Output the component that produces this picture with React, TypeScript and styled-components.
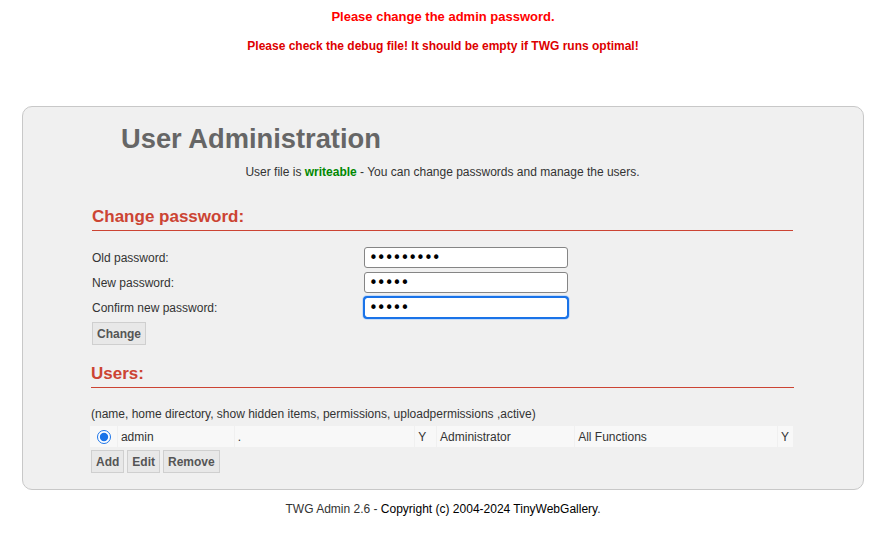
import styled, { createGlobalStyle } from 'styled-components';

const GlobalStyle = createGlobalStyle`
  body {
    margin: 0;
    background: #ffffff;
    font-family: 'Liberation Sans', Arial, sans-serif;
    font-size: 12px;
    color: #333333;
  }
`;

const users = [
  { name: 'admin', home: '.', hidden: 'Y', role: 'Administrator', perms: 'All Functions', active: 'Y' },
];

export default function App() {
  return (
    <Page>
      <GlobalStyle />
      <Warning>Please change the admin password.</Warning>
      <DebugNote>Please check the debug file! It should be empty if TWG runs optimal!</DebugNote>

      <Panel>
        <Title>User Administration</Title>
        <Status>
          User file is <Writeable>writeable</Writeable> - You can change passwords and manage the users.
        </Status>

        <Section>
          <SectionTitle>Change password:</SectionTitle>
          <PasswordForm>
            <FieldLabel>Old password:</FieldLabel>
            <Input type="password" defaultValue="123456789" />
            <FieldLabel>New password:</FieldLabel>
            <Input type="password" defaultValue="12345" />
            <FieldLabel>Confirm new password:</FieldLabel>
            <Input type="password" defaultValue="12345" $focused />
          </PasswordForm>
          <Button>Change</Button>
        </Section>

        <Section $users>
          <SectionTitle $users>Users:</SectionTitle>
          <Columns>(name, home directory, show hidden items, permissions, uploadpermissions ,active)</Columns>
          <UserTable>
            <tbody>
              {users.map((u) => (
                <tr key={u.name}>
                  <Cell $w={27} $center>
                    <Radio defaultChecked />
                  </Cell>
                  <Cell $w={117}>{u.name}</Cell>
                  <Cell $w={182}>{u.home}</Cell>
                  <Cell $w={21}>{u.hidden}</Cell>
                  <Cell $w={138}>{u.role}</Cell>
                  <Cell $w={204}>{u.perms}</Cell>
                  <Cell $w={15}>{u.active}</Cell>
                </tr>
              ))}
            </tbody>
          </UserTable>
          <ButtonRow>
            <Button>Add</Button>
            <Button>Edit</Button>
            <Button>Remove</Button>
          </ButtonRow>
        </Section>
      </Panel>

      <Footer>
        TWG Admin 2.6 - <FooterLink>Copyright (c) 2004-2024 TinyWebGallery</FooterLink>.
      </Footer>
    </Page>
  );
}

const Page = styled.div`
  padding: 9px 28px 0 22px;
`;

const Warning = styled.div`
  text-align: center;
  font-size: 13px;
  font-weight: bold;
  line-height: 16px;
  color: #ff0000;
`;

const DebugNote = styled.div`
  margin-top: 13px;
  text-align: center;
  font-size: 12px;
  font-weight: bold;
  line-height: 16px;
  color: #dd0000;
`;

const Panel = styled.div`
  margin-top: 52px;
  box-sizing: border-box;
  height: 384px;
  padding: 14px 69px 0 68px;
  background: #f0f0f0;
  border: 1px solid #c8c8c8;
  border-radius: 10px;
`;

const Title = styled.h1`
  margin: 0 0 0 30px;
  font-size: 27.3px;
  line-height: 36px;
  font-weight: bold;
  color: #666666;
`;

const Status = styled.div`
  margin-top: 8px;
  text-align: center;
  line-height: 14px;
  color: #333333;
`;

const Writeable = styled.b`
  color: #008800;
`;

const Section = styled.div<{ $users?: boolean }>`
  margin-top: ${(p) => (p.$users ? '19px' : '28px')};
  margin-left: ${(p) => (p.$users ? '0' : '1px')};
`;

const SectionTitle = styled.h2<{ $users?: boolean }>`
  margin: 0;
  padding-bottom: 3px;
  font-size: 17px;
  line-height: 20px;
  font-weight: bold;
  color: #cc4433;
  border-bottom: 1px solid #cc4433;
  width: ${(p) => (p.$users ? '703px' : '701px')};
`;

const PasswordForm = styled.div`
  display: grid;
  grid-template-columns: 272px 204px;
  row-gap: 4px;
  align-items: center;
  margin-top: 16px;
`;

const FieldLabel = styled.label`
  font-size: 12px;
  color: #333333;
`;

const Input = styled.input<{ $focused?: boolean }>`
  box-sizing: border-box;
  width: 204px;
  height: 21px;
  margin: 0;
  padding: 0 4px;
  font-family: 'DejaVu Sans', sans-serif;
  font-size: 15px;
  letter-spacing: -1px;
  background: #ffffff;
  border: 1px solid ${(p) => (p.$focused ? '#1a73e8' : '#858585')};
  border-radius: 3px;
  outline: ${(p) => (p.$focused ? '2px solid #1a73e8' : 'none')};
  outline-offset: -1px;
  box-shadow: ${(p) => (p.$focused ? '0 0 0 2px #c7dcf7' : 'none')};
`;

const Button = styled.button`
  box-sizing: border-box;
  height: 23px;
  margin: 4px 0 0;
  padding: 0 4px;
  font-family: 'Liberation Sans', Arial, sans-serif;
  font-size: 12px;
  font-weight: bold;
  color: #555555;
  background: #e8e8e8;
  border: 1px solid #cfcfcf;
  border-radius: 0;
`;

const Columns = styled.div`
  margin-top: 19px;
  line-height: 14px;
  color: #333333;
`;

const UserTable = styled.table`
  margin: 4px 0 0 -2px;
  border-spacing: 1px;
  table-layout: fixed;
`;

const Cell = styled.td<{ $w: number; $center?: boolean }>`
  width: ${(p) => p.$w}px;
  height: 21px;
  padding: 0 3px;
  box-sizing: border-box;
  background: #f8f8f8;
  text-align: ${(p) => (p.$center ? 'center' : 'left')};
  color: #333333;
  font-size: 12px;
`;

const Radio = styled.input.attrs({ type: 'radio' })`
  width: 14px;
  height: 14px;
  margin: 0 0 0 2px;
  vertical-align: middle;
  accent-color: #1a73e8;
`;

const ButtonRow = styled.div`
  display: flex;
  gap: 3px;

  ${Button} {
    margin-top: 2px;
  }
`;

const Footer = styled.div`
  margin-top: 12px;
  text-align: center;
  line-height: 14px;
  color: #333333;
`;

const FooterLink = styled.span`
  color: #000000;
`;
